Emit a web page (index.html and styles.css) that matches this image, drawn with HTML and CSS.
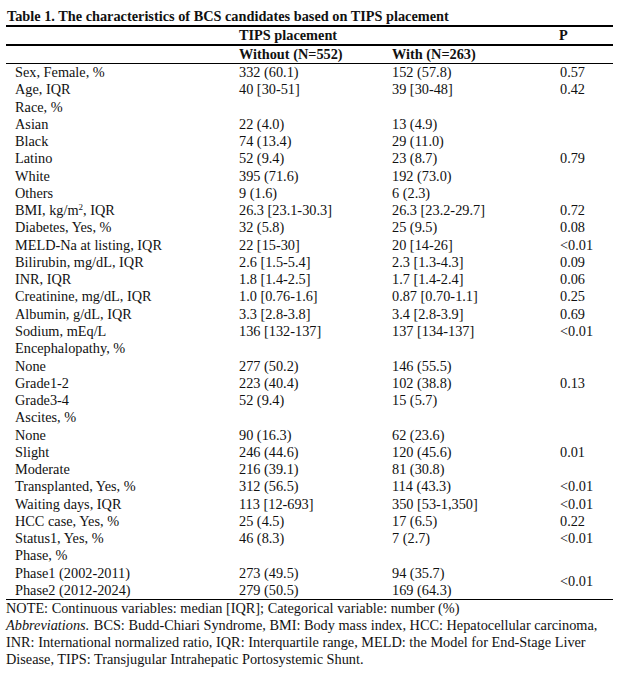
FILE: index.html
```html
<!DOCTYPE html>
<html>
<head>
<meta charset="utf-8">
<link rel="stylesheet" href="styles.css">
</head>
<body>
<div class="page">
  <div class="title">Table 1. The characteristics of BCS candidates based on TIPS placement</div>
  <table class="tbl">
    <colgroup>
      <col class="c1"><col class="c2"><col class="c3"><col class="c4">
    </colgroup>
    <thead>
      <tr class="h1"><th></th><th colspan="2">TIPS placement</th><th>P</th></tr>
      <tr class="h2"><th></th><th>Without (N=552)</th><th>With (N=263)</th><th></th></tr>
    </thead>
    <tbody>
      <tr><td>Sex, Female, %</td><td>332 (60.1)</td><td>152 (57.8)</td><td>0.57</td></tr>
      <tr><td>Age, IQR</td><td>40 [30-51]</td><td>39 [30-48]</td><td>0.42</td></tr>
      <tr><td>Race, %</td><td></td><td></td><td></td></tr>
      <tr><td>Asian</td><td>22 (4.0)</td><td>13 (4.9)</td><td></td></tr>
      <tr><td>Black</td><td>74 (13.4)</td><td>29 (11.0)</td><td></td></tr>
      <tr><td>Latino</td><td>52 (9.4)</td><td>23 (8.7)</td><td>0.79</td></tr>
      <tr><td>White</td><td>395 (71.6)</td><td>192 (73.0)</td><td></td></tr>
      <tr><td>Others</td><td>9 (1.6)</td><td>6 (2.3)</td><td></td></tr>
      <tr><td>BMI, kg/m<sup>2</sup>, IQR</td><td>26.3 [23.1-30.3]</td><td>26.3 [23.2-29.7]</td><td>0.72</td></tr>
      <tr><td>Diabetes, Yes, %</td><td>32 (5.8)</td><td>25 (9.5)</td><td>0.08</td></tr>
      <tr><td>MELD-Na at listing, IQR</td><td>22 [15-30]</td><td>20 [14-26]</td><td>&lt;0.01</td></tr>
      <tr><td>Bilirubin, mg/dL, IQR</td><td>2.6 [1.5-5.4]</td><td>2.3 [1.3-4.3]</td><td>0.09</td></tr>
      <tr><td>INR, IQR</td><td>1.8 [1.4-2.5]</td><td>1.7 [1.4-2.4]</td><td>0.06</td></tr>
      <tr><td>Creatinine, mg/dL, IQR</td><td>1.0 [0.76-1.6]</td><td>0.87 [0.70-1.1]</td><td>0.25</td></tr>
      <tr><td>Albumin, g/dL, IQR</td><td>3.3 [2.8-3.8]</td><td>3.4 [2.8-3.9]</td><td>0.69</td></tr>
      <tr><td>Sodium, mEq/L</td><td>136 [132-137]</td><td>137 [134-137]</td><td>&lt;0.01</td></tr>
      <tr><td>Encephalopathy, %</td><td></td><td></td><td></td></tr>
      <tr><td>None</td><td>277 (50.2)</td><td>146 (55.5)</td><td></td></tr>
      <tr><td>Grade1-2</td><td>223 (40.4)</td><td>102 (38.8)</td><td>0.13</td></tr>
      <tr><td>Grade3-4</td><td>52 (9.4)</td><td>15 (5.7)</td><td></td></tr>
      <tr><td>Ascites, %</td><td></td><td></td><td></td></tr>
      <tr><td>None</td><td>90 (16.3)</td><td>62 (23.6)</td><td></td></tr>
      <tr><td>Slight</td><td>246 (44.6)</td><td>120 (45.6)</td><td>0.01</td></tr>
      <tr><td>Moderate</td><td>216 (39.1)</td><td>81 (30.8)</td><td></td></tr>
      <tr><td>Transplanted, Yes, %</td><td>312 (56.5)</td><td>114 (43.3)</td><td>&lt;0.01</td></tr>
      <tr><td>Waiting days, IQR</td><td>113 [12-693]</td><td>350 [53-1,350]</td><td>&lt;0.01</td></tr>
      <tr><td>HCC case, Yes, %</td><td>25 (4.5)</td><td>17 (6.5)</td><td>0.22</td></tr>
      <tr><td>Status1, Yes, %</td><td>46 (8.3)</td><td>7 (2.7)</td><td>&lt;0.01</td></tr>
      <tr><td>Phase, %</td><td></td><td></td><td></td></tr>
      <tr><td>Phase1 (2002-2011)</td><td>273 (49.5)</td><td>94 (35.7)</td><td rowspan="2" class="mid">&lt;0.01</td></tr>
      <tr><td>Phase2 (2012-2024)</td><td>279 (50.5)</td><td>169 (64.3)</td></tr>
    </tbody>
  </table>
  <div class="notes">
    <p>NOTE: Continuous variables: median [IQR]; Categorical variable: number (%)</p>
    <p><span class="abbr">Abbreviations.</span> BCS: Budd-Chiari Syndrome, BMI: Body mass index, HCC: Hepatocellular carcinoma, INR: International normalized ratio, IQR: Interquartile range, MELD: the Model for End-Stage Liver Disease, TIPS: Transjugular Intrahepatic Portosystemic Shunt.</p>
  </div>
</div>
</body>
</html>
```
FILE: styles.css
```css
html, body {
  margin: 0;
  padding: 0;
  background: #fff;
}
body {
  font-family: "Liberation Serif", "Times New Roman", serif;
  font-size: 14.3px;
  color: #111;
}
.page {
  width: 607px;
  padding: 7px 0 0 6px;
}
.title {
  font-weight: bold;
  line-height: 18px;
  padding-left: 1px;
}
.tbl {
  width: 607px;
  border-collapse: collapse;
  table-layout: fixed;
  border-top: 2px solid #000;
  border-bottom: 1px solid #000;
}
.c1 { width: 233px; }
.c2 { width: 153px; }
.c3 { width: 167px; }
.c4 { width: 54px; }
.tbl th, .tbl td {
  padding: 0;
  text-align: left;
  white-space: nowrap;
  line-height: 17px;
  height: 17px;
  vertical-align: middle;
}
.tbl th {
  font-weight: bold;
}
.tbl td:first-child {
  padding-left: 9px;
}
.tbl th:nth-child(4), .tbl td:nth-child(4) {
  padding-left: 1px;
}
.h1 th {
  border-bottom: 2px solid #000;
  height: 17px;
}
.h2 th {
  border-bottom: 1px solid #000;
  height: 17px;
}
.tbl tbody td {
  height: 17.27px;
  line-height: 17.27px;
}
.tbl td.mid {
  vertical-align: middle;
}
sup {
  font-size: 9px;
  line-height: 0;
  vertical-align: 5px;
}
.notes {
  width: 600px;
}
.notes p {
  margin: 0;
  line-height: 17px;
}
.abbr {
  font-style: italic;
  padding-right: 1px;
}
```
